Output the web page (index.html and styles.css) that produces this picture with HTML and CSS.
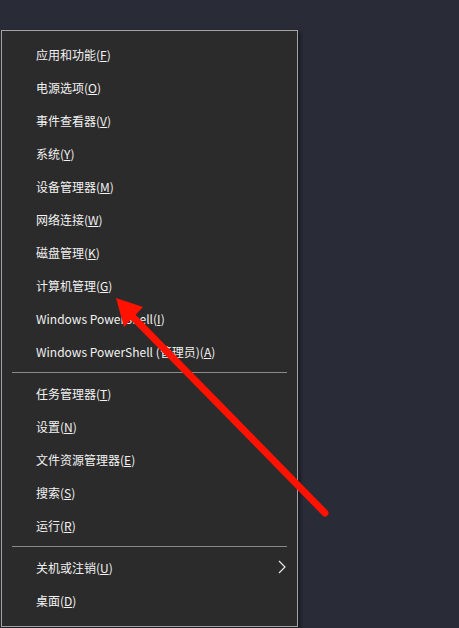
FILE: index.html
```html
<!DOCTYPE html>
<html lang="zh-CN">
<head>
<meta charset="utf-8">
<title>Win+X 菜单</title>
<link rel="stylesheet" href="styles.css">
</head>
<body>
<div class="menu">
  <div class="group">
    <div class="item"><span>应用和功能(<u>F</u>)</span></div>
    <div class="item"><span>电源选项(<u>O</u>)</span></div>
    <div class="item"><span>事件查看器(<u>V</u>)</span></div>
    <div class="item"><span>系统(<u>Y</u>)</span></div>
    <div class="item"><span>设备管理器(<u>M</u>)</span></div>
    <div class="item"><span>网络连接(<u>W</u>)</span></div>
    <div class="item"><span>磁盘管理(<u>K</u>)</span></div>
    <div class="item"><span>计算机管理(<u>G</u>)</span></div>
    <div class="item"><span>Windows PowerShell(<u>I</u>)</span></div>
    <div class="item"><span>Windows PowerShell (管理员)(<u>A</u>)</span></div>
  </div>
  <div class="sep"></div>
  <div class="group">
    <div class="item"><span>任务管理器(<u>T</u>)</span></div>
    <div class="item"><span>设置(<u>N</u>)</span></div>
    <div class="item"><span>文件资源管理器(<u>E</u>)</span></div>
    <div class="item"><span>搜索(<u>S</u>)</span></div>
    <div class="item"><span>运行(<u>R</u>)</span></div>
  </div>
  <div class="sep"></div>
  <div class="group">
    <div class="item sub"><span>关机或注销(<u>U</u>)</span><svg class="chev" width="8" height="14" viewBox="0 0 8 14"><path d="M1 1 L7 7 L1 13" fill="none" stroke="#e8e8e8" stroke-width="1.2"/></svg></div>
    <div class="item"><span>桌面(<u>D</u>)</span></div>
  </div>
</div>
<svg class="arrow" width="459" height="628" viewBox="0 0 459 628">
  <line x1="128" y1="312" x2="325" y2="513" stroke="#ff1200" stroke-width="7" stroke-linecap="round"/>
  <polygon points="116,298 143,307 124,327" fill="#ff1200"/>
</svg>
</body>
</html>
```
FILE: styles.css
```css
html, body {
  margin: 0;
  padding: 0;
  background: #292b37;
  height: 628px;
  overflow: hidden;
}
body {
  position: relative;
  font-family: "Segoe UI", "Noto Sans CJK SC", "Noto Sans", sans-serif;
  font-size: 12px;
  color: #f2f2f2;
}
.menu {
  margin: 30px 0 0 1px;
  width: 295px;
  background: #2b2b2b;
  border: 1px solid #a3a3a3;
  box-shadow: 3px 2px 3px rgba(0, 0, 0, 0.35);
  padding-top: 7px;
  height: 588px;
}
.item {
  height: 33px;
  display: flex;
  align-items: center;
  padding-left: 34px;
  position: relative;
  white-space: nowrap;
}
.item u {
  text-decoration: underline;
  text-underline-offset: 1px;
}
.sep {
  height: 1px;
  margin: 4px 10px 4px 10px;
  background: #8a8a8a;
}
.sub .chev {
  position: absolute;
  right: 11px;
  top: 9px;
}
.arrow {
  position: absolute;
  left: 0;
  top: 0;
  pointer-events: none;
}
```
